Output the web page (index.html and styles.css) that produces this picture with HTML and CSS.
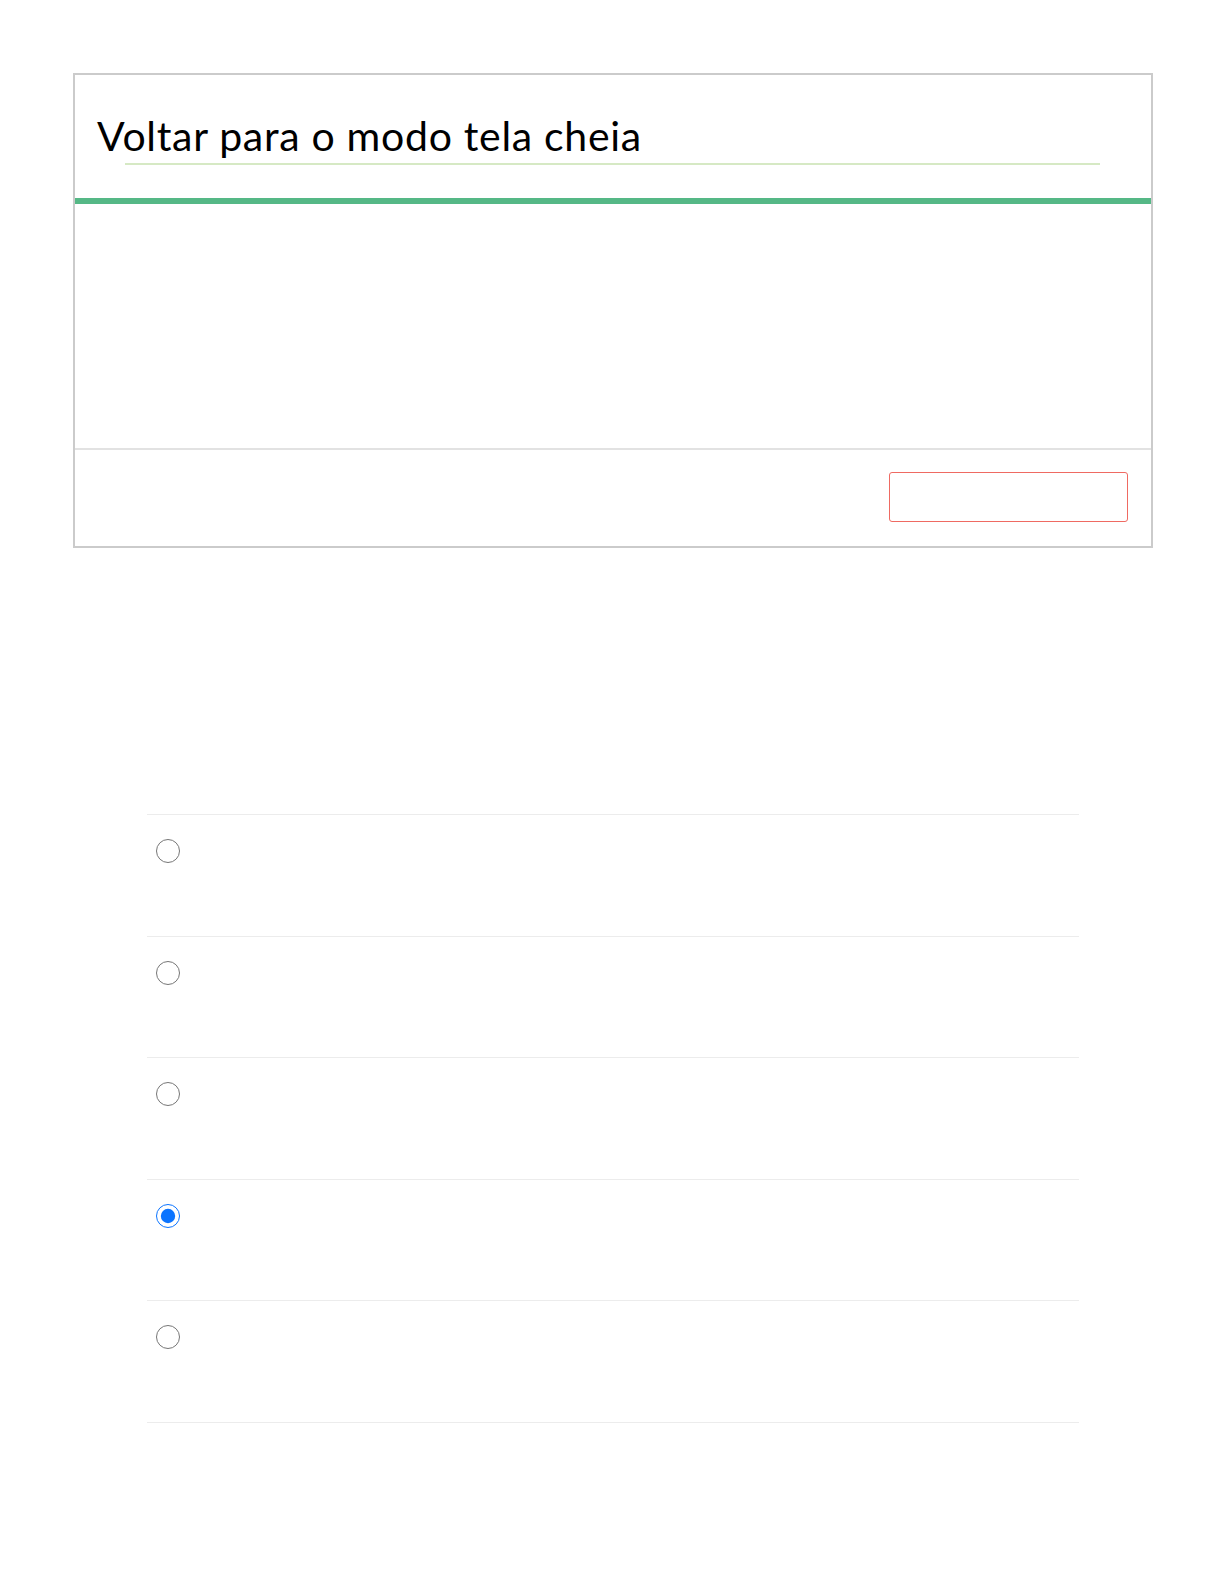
FILE: index.html
```html
<!DOCTYPE html>
<html lang="pt">
<head>
<meta charset="utf-8">
<title>Voltar para o modo tela cheia</title>
<link rel="stylesheet" href="styles.css">
</head>
<body>
<div class="page">
  <section class="panel">
    <header class="panel-header">
      <h1 class="panel-title">Voltar para o modo tela cheia</h1>
      <div class="title-rule"></div>
    </header>
    <div class="panel-accent"></div>
    <div class="panel-body"></div>
    <footer class="panel-footer">
      <button class="panel-button" type="button"></button>
    </footer>
  </section>

  <ul class="options">
    <li class="option"><input class="option-radio" type="radio" name="opt"></li>
    <li class="option"><input class="option-radio" type="radio" name="opt"></li>
    <li class="option"><input class="option-radio" type="radio" name="opt"></li>
    <li class="option"><input class="option-radio" type="radio" name="opt" checked></li>
    <li class="option"><input class="option-radio" type="radio" name="opt"></li>
  </ul>
</div>
</body>
</html>
```
FILE: styles.css
```css
* { box-sizing: border-box; }
html, body { margin: 0; padding: 0; background: #ffffff; }
body { font-family: Lato, "Open Sans", sans-serif; color: #000; }

.page {
  padding: 73px 71px 0 73px;
}

.panel {
  width: 1080px;
  border: 2px solid #cbcbcb;
  background: #fff;
}

.panel-header {
  height: 123px;
  padding-top: 36px;
}

.panel-title {
  margin: 0 0 0 22px;
  font-family: Lato, sans-serif;
  font-weight: 400;
  font-size: 41px;
  letter-spacing: 0.7px;
  line-height: 49px;
  color: #000;
}

.title-rule {
  margin: 3px 51px 0 50px;
  height: 2px;
  background: #d6e9c4;
}

.panel-accent {
  height: 6px;
  background: #55b886;
}

.panel-body {
  height: 244px;
}

.panel-footer {
  border-top: 2px solid #e2e2e2;
  display: flex;
  justify-content: flex-end;
  padding: 22px 23px 24px 0;
}

.panel-button {
  width: 239px;
  height: 50px;
  border: 1.5px solid #ef6a62;
  border-radius: 3px;
  background: #fff;
  padding: 0;
}

.options {
  list-style: none;
  margin: 266px 0 0 74px;
  padding: 0;
  width: 932px;
  border-top: 1px solid #ececec;
}

.option {
  height: 121.6px;
  border-bottom: 1px solid #ececec;
  padding: 24px 0 0 9px;
}

.option-radio {
  display: block;
  width: 24px;
  height: 24px;
  margin: 0;
  accent-color: #0b74ff;
}
```
